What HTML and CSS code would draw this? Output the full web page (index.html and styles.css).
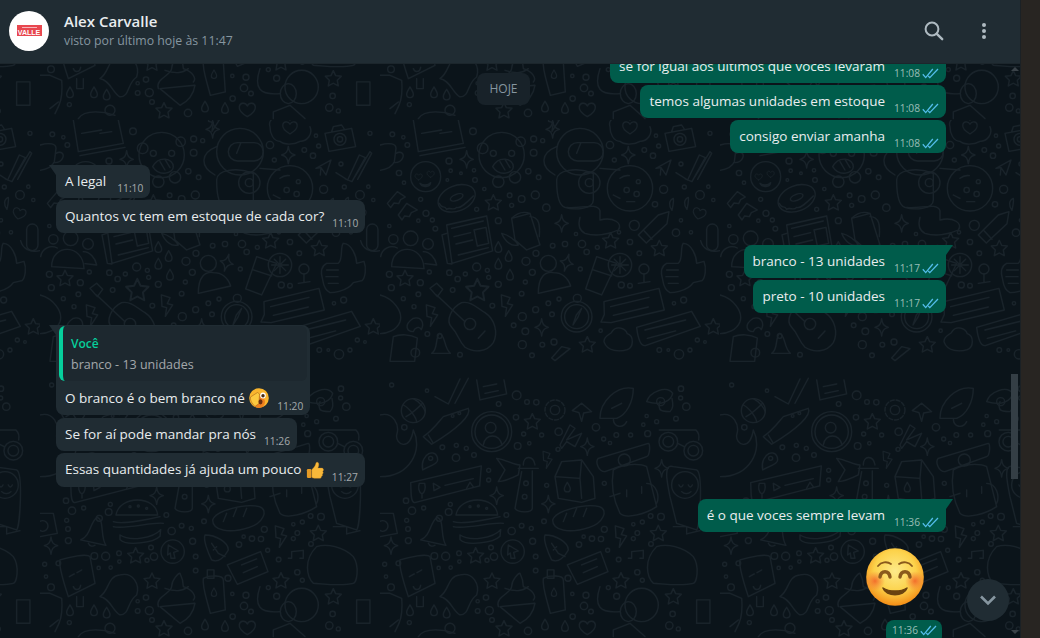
FILE: index.html
```html
<!DOCTYPE html>
<html lang="pt-BR">
  <head>
    <meta charset="UTF-8" />
    <title>Alex Carvalle</title>
    <link rel="stylesheet" href="styles.css">
  </head>
  <body>
    <svg class="defs" width="0" height="0">
      <defs>
        <symbol id="ticks" viewBox="0 0 17 11">
          <path d="M.8 6.300l2.900 3.300L10.800 1M6.300 8l1.500 1.600L16 1" fill="none" stroke="currentColor" stroke-width="1.300"/>
        </symbol>
        <path id="s5" d="M0-24l7 15 17 2-12 12 3 17-15-8-15 8 3-17-12-12 17-2z"/>
        <path id="s4" d="M0-26c2 16 6 22 20 26-14 4-18 10-20 26-2-16-6-22-20-26 14-4 18-10 20-26z"/>
        <path id="hrt" d="M0 22c-14-8-26-18-24-30 2-12 18-14 24-2 6-12 22-10 24 2 2 12-10 22-24 30z"/>
        <path id="drop" d="M0-20c6 10 10 16 10 22a10 10 0 0 1-20 0c0-6 4-12 10-22z"/>
        <path id="bolt" d="M-16-30l26 8-8 18 16 4-22 34 4-26-14-4z"/>

        <!-- drawn in 3x units, tile is 340x518 on screen -->
        <pattern id="doodles" x="40" y="56" width="340" height="518" patternUnits="userSpaceOnUse">
          <g transform="scale(.3333)" fill="none" stroke="#19232a" stroke-width="4" stroke-linejoin="round" stroke-linecap="round">
            <!-- calendar -->
            <path d="M100 0l15 95 135-25-15-70M120 107l135-25M125 40l60-10M180 40l35-5"/>
            <!-- mug -->
            <path d="M0 75c30-8 48-4 48 10l-5 40c-8 18-30 24-43 26M48 100c14-8 26 0 20 14-4 10-16 14-25 14"/>
            <!-- monkey -->
            <circle cx="365" cy="105" r="68"/><circle cx="308" cy="85" r="16"/><circle cx="422" cy="65" r="14"/>
            <circle cx="340" cy="100" r="9"/><circle cx="395" cy="100" r="9"/>
            <path d="M338 140c18-34 62-26 62 0 0 20-42 32-62 0zM360 125l15 25M375 118l15 25"/>
            <circle cx="355" cy="185" r="17"/><circle cx="405" cy="172" r="17"/>
            <!-- love face -->
            <circle cx="137" cy="170" r="45"/>
            <use href="#hrt" transform="translate(116 170) scale(.45)"/><use href="#hrt" transform="translate(152 162) scale(.45)"/>
            <path d="M120 190c10 8 24 6 32-2-2 14-26 16-32 2z"/>
            <!-- keys -->
            <path d="M22 250l30-35 24 16-14 8-6 12-14-2-10 14zM55 285l25-35 32 20-18 8-6 12-14-2-8 12z"/>
            <!-- donut -->
            <ellipse cx="230" cy="235" rx="58" ry="38" transform="rotate(-22 230 235)"/>
            <ellipse cx="230" cy="232" rx="20" ry="9" transform="rotate(-22 230 232)"/>
            <path d="M178 250c8 20 14 2 22 18 10-8 20 6 30-6 10 6 30-14 50-34"/>
            <!-- astronaut -->
            <circle cx="600" cy="95" r="70"/><rect x="565" y="68" width="105" height="55" rx="28"/>
            <path d="M590 100l12-30M530 80c-50 20-50 60-5 85M530 180c0-30 60-40 110-20v80c0 30-60 30-85 22-20-6-25-50-25-82z"/>
            <path d="M560 262c40 6 90-16 100 10v28c40-10 70 10 55 30-30 14-70 20-100 10-20-10-20-30-15-48"/>
            <circle cx="628" cy="188" r="32"/><circle cx="628" cy="188" r="12"/>
            <path d="M660 145l60 5"/>
            <!-- moon -->
            <circle cx="750" cy="205" r="68"/><circle cx="740" cy="210" r="8"/><circle cx="775" cy="185" r="6"/><circle cx="770" cy="222" r="8"/>
            <path d="M720 175c8-6 18-10 28-8M700 225l20 10M740 245h24"/>
            <!-- cloud with heart -->
            <path d="M690 20c-10-30 40-40 60-20M810 20c10 24-10 44-30 44-20 12-50 10-60 0-20 0-30-24-30-44"/>
            <use href="#hrt" transform="translate(750 22) scale(.9)"/>
            <!-- camera -->
            <path d="M855 40l80-15 12 55-80 14zM875 35l5-15 25-5 8 12"/>
            <circle cx="900" cy="58" r="18"/><circle cx="900" cy="58" r="8"/>
            <!-- checks -->
            <path d="M888 158l35 22 35-75 18 8-40 72-20-8M945 170l45-75 5 5-42 78"/>
            <path d="M828 145l45-25-15 45-15-22zM843 143l-2 22"/>
            <!-- newspaper -->
            <path d="M200 315l120-27 18 105-122 37zM200 340l-14 5 16 85 14 2"/>
            <path d="M215 325l95-22M222 350l50-12M228 372l50-12M235 405l90-22M282 330l36-8 8 48-34 8z"/>
            <!-- kettle -->
            <path d="M395 295l55-15 30 95-40 15-35-30zM395 295c20-20 40-20 55-15M450 290c30 0 30 30 28 60M365 340c20 4 40 20 50 35-20 6-40-10-50-35z"/>
            <!-- people -->
            <circle cx="92" cy="355" r="22"/><circle cx="40" cy="358" r="14"/><circle cx="144" cy="372" r="16"/>
            <path d="M35 440c0-70 95-70 97 6zM2 410c4-26 30-36 50-26M130 395c20 0 36 20 40 40l-35-4"/>
            <!-- person -->
            <circle cx="505" cy="430" r="24"/>
            <path d="M475 520c0-50 20-66 45-62 30 0 45 20 52 40z"/>
            <!-- juice -->
            <path d="M650 410l60 20-45 95-48-18zM640 450l55 18"/>
            <circle cx="720" cy="435" r="35"/><path d="M720 410v50M695 435h50M703 418l34 34M737 418l-34 34"/>
            <circle cx="792" cy="447" r="15"/><path d="M792 462v25M775 490l35-5"/>
            <!-- thumb -->
            <path d="M895 430c15-10 5-50 15-60 25 0 40 40 40 60l22-6c8 20 4 50-6 58l-26 6c-20 30-70 30-70 30-20-10-20-30-22-40-6-20-4-40 12-48z"/>
            <path d="M860 450h35M858 470h36M865 490h30"/>
            <!-- mic -->
            <rect x="980" y="312" width="34" height="80" rx="17"/>
            <path d="M962 362c6 26 30 36 58 30"/>
            <!-- pencil -->
            <path d="M775 345l60-60 32-10-6 36-62 58zM790 330l26 28"/>
            <path d="M880 235c-14 6-14 24-4 36 2-12 6-24 4-36zM925 232c-14 6-14 24-4 36 2-12 6-24 4-36z"/>
            <use href="#hrt" transform="translate(958 280) scale(.8) rotate(15)"/>
            <!-- guitar -->
            <path d="M150 505l20-15 18 18-16 22zM170 525l85 80"/>
            <path d="M245 548c30-6 50 20 70 30 30 20 40 60 25 90-20 30-60 30-85 14-20-20-20-40-40-60-20-20 0-60 30-74z"/>
            <circle cx="270" cy="612" r="17"/><path d="M295 655l20-22"/>
            <!-- compass -->
            <circle cx="590" cy="590" r="46"/><circle cx="590" cy="590" r="36"/><circle cx="592" cy="535" r="12"/>
            <path d="M605 565l-12 28-14 22 10-30z"/>
            <!-- chat bubbles -->
            <path d="M672 545l165-40 16 65-160 38-30-2 10-22z"/>
            <path d="M692 560l115-28M700 586l105-25"/>
            <path d="M770 622l165-48 26 45-165 58c-20 2-24-40-26-55z"/>
            <path d="M795 630l122-30M802 655l85-22"/>
            <!-- bell and cloud -->
            <path d="M155 700c20-10 10-50 24-60 18 6 12 44 32 60z"/><circle cx="179" cy="648" r="7"/>
            <path d="M672 665c0-20 20-20 24-30 14-20 40-10 46 6 20 6 20 40 0 48-20 6-60 8-70-24z"/>
            <path d="M40 650c20-8 50-8 72 4l-8 70H30z"/><circle cx="106" cy="698" r="13"/>
            <path d="M545 680l25 6-45 36-10-8zM0 525c40 10 70 50 60 80-10 26-40 36-60 36"/>
            <path d="M100 635c-20 0-30-20 0-40 24-6 34 14 24 34-6-12-20-6-24 6z"/>

            <!-- second half -->
            <g transform="translate(0 780)">
              <!-- ball -->
              <circle cx="100" cy="92" r="36"/><path d="M70 75c20 10 40 40 40 52M128 70c-20 20-30 30-50 40M100 56c20 10 34 30 36 40"/>
              <!-- checks -->
              <path d="M165 50l40 22 35-75M225 70l40-75"/>
              <path d="M290 0l10 60 80-18-8-42M310 20l40-8M315 40l40-8"/>
              <!-- sneaker -->
              <path d="M130 170c30-20 50-50 60-60l75-25c10 20-30 60-110 108zM145 165l15 25"/>
              <circle cx="218" cy="108" r="4"/><circle cx="238" cy="100" r="4"/>
              <!-- moon shape -->
              <path d="M0 105c40-10 60 30 50 60-4 30 40 50 50-15 30 60-10 140-100 140"/>
              <!-- profile -->
              <circle cx="335" cy="155" r="60"/><circle cx="335" cy="155" r="50"/><circle cx="332" cy="143" r="16"/>
              <path d="M310 195c4-36 50-36 56 0"/>
              <!-- gear -->
              <circle cx="525" cy="90" r="14"/><circle cx="525" cy="90" r="30" stroke-dasharray="12 6"/>
              <path d="M540 195l30-60 15 10-25 35 45-20-20 40-25-15-15 20zM605 70l30 25-24 4-6 25-8-26-20-6z"/>
              <!-- rocket fragment -->
              <path d="M660 115c0-50 50-100 100-90 0 40-20 80-50 90zM695 85l30-15M800 65c10-30 60-50 78-25-4 20-30 40-78 25zM840 65c-10 30 10 30 30 30 10-10 10-20 6-40M700 115c0 30 30 30 40 10"/>
              <circle cx="842" cy="65" r="12"/>
              <!-- glasses -->
              <circle cx="865" cy="185" r="28"/><circle cx="865" cy="185" r="16"/><circle cx="940" cy="212" r="28"/><circle cx="940" cy="212" r="16"/>
              <path d="M838 150l110 0c10 10 10 20 8 30M893 190l20 10"/>
              <!-- pin -->
              <path d="M128 270c-10-50 44-70 45-30 0 14-30 20-45 30z"/><circle cx="152" cy="235" r="6"/>
              <!-- voice message -->
              <path d="M92 308l212-50-5 60-195 50c-14 0-10-40-12-60z"/>
              <path d="M118 310l16 0c4 14 0 28-8 32-10-4-12-20-8-32zM126 342v12M160 310l20 12-18 10zM195 316l85-20M260 325l10-18 10 14"/>
              <!-- lighthouse -->
              <path d="M350 235c30 4 50 20 70 20l-5 30c-20 10-40 20-60 20l20-35zM415 265h60M430 255c0-30 30-30 35 0M425 275l-20 110c10 14 50 14 52 0v-112"/>
              <circle cx="438" cy="310" r="7"/><circle cx="434" cy="350" r="7"/>
              <use href="#bolt" transform="translate(502 238) scale(.8)"/>
              <!-- milk -->
              <path d="M545 245l60-5 35 50 5 65-40 12-70-12-10-65zM605 240l-5 55-75-5M600 295l5 60"/>
              <use href="#drop" transform="translate(562 325) scale(.9)"/>
              <!-- backpack -->
              <path d="M655 235l150-45c6 0 6 36-5 40l-125 45c-20 0-30-30-20-40zM700 270c30-20 80-20 100-10l30 120c-30 20-90 40-110 20-10-20-30-70-20-130z"/>
              <path d="M690 350l30-10M800 310c30 0 40 40 30 60M740 330v20M785 320v20"/>
              <circle cx="733" cy="240" r="18"/>
              <!-- bread -->
              <path d="M518 420c10-30 100-50 140-40 30 10 10 50-30 62-60 20-110 10-110-22zM560 400l-10 25M590 385l-10 25M620 385l-10 25"/>
              <!-- burger -->
              <path d="M228 405c10-60 120-60 125 0zM220 425c30 10 120-10 140-15M220 440c30 10 120-15 150-10M240 465c30 20 100 10 122-16l-2 20c-20 20-100 30-120 10z"/>
              <circle cx="270" cy="380" r="3"/><circle cx="295" cy="378" r="3"/><circle cx="320" cy="385" r="3"/>
              <!-- camera -->
              <path d="M0 400l40 0 12 60-52 10"/><circle cx="8" cy="438" r="16"/>
              <!-- bell -->
              <path d="M122 480c30-10 30-60 50-68 22 8 8 60 26 84zM145 490c4 10 14 10 20 6"/><circle cx="178" cy="415" r="9"/>
              <!-- cursor -->
              <circle cx="398" cy="515" r="35"/><path d="M385 495l30 18-14 4 4 18-12 0-2-16-8 6z"/>
              <!-- leaf -->
              <path d="M495 465c30 0 70 20 70 45-10 20-30 40-50 30-10-20-26-60-20-75zM515 490l20 30 20 10M520 510l10-10"/>
              <path d="M562 555l100-40 22 60-92 38zM605 555l45-18M610 578l42-18"/>
              <path d="M755 515v20M755 515l35-4v22M745 535h10M780 535h10"/>
              <!-- splat and ice -->
              <path d="M830 500c30-10 80 0 110 30 20 30 10 80 0 80-40 10-100 0-120 0-20-20-30-70 10-110z"/>
              <path d="M60 540c30-10 80-20 90-10l15 80-80 40c-10-30-30-90-25-110zM110 650v30h20v-30"/>
              <path d="M88 590l15-8M125 570l-14 8M100 620c6 14 20 10 22-4"/>
              <path d="M180 650c30-20 20-60 60-65 40-10 60 30 50 60-30 20-20 60-50 60-20-10-30-50-60-55z"/>
              <!-- cupcake -->
              <path d="M355 680c-10-30 40-40 40-60 0-20 20-40 25-40 10 20 10 30 10 40 30 10 40 30 30 40M360 680l60 50c20-10 40-30 45-60zM375 625c30 10 50 10 70-5"/>
              <!-- bottle -->
              <path d="M490 595c20-10 60-10 60 5l6 90-45 10c-10-40-25-80-21-105zM502 570h20v25h-20z"/>
              <use href="#drop" transform="translate(522 640) scale(.8)"/>
              <!-- dog -->
              <circle cx="785" cy="675" r="50"/><ellipse cx="745" cy="695" rx="24" ry="30"/>
              <path d="M660 620c-20 60 0 80 60 75M700 770l0-20 50-20 45 40"/>
              <!-- small items -->
              <path d="M0 640h30l35 15c5 60-10 80-20 100M30 740l25-20"/>
              <use href="#hrt" transform="translate(622 742) scale(1)"/>
              <path d="M115 770c20-30 80-20 110-10"/><circle cx="210" cy="745" r="15"/>
              <path d="M870 350c-10-50-20-100 10-90l70 10c20 10 10 170 0 180l-60-20zM880 440h40v22l40-10"/>
              <circle cx="915" cy="315" r="40"/><path d="M897 315c4 8 8 8 12 0M925 315c4 8 8 8 12 0M905 335c8 8 20 8 28 0"/>
              <path d="M950 660h40v70h-40z"/>
              <use href="#s5" x="457" y="125"/><use href="#s5" x="287" y="527"/><use href="#s5" x="336" y="603"/>
              <use href="#s5" x="723" y="602"/><use href="#s5" x="835" y="460"/><use href="#s5" x="880" y="650"/><use href="#s5" x="372" y="746"/>
              <use href="#s4" x="350" y="347"/><use href="#s4" x="505" y="372"/><use href="#s4" x="845" y="265"/><use href="#s4" x="33" y="497"/><use href="#s4" x="622" y="200"/>
              <use href="#drop" x="90" y="695"/><use href="#drop" x="162" y="695"/><use href="#drop" x="200" y="702"/><use href="#drop" x="495" y="738"/><use href="#drop" x="555" y="742"/>
              <use href="#bolt" x="722" y="468"/>
              <circle cx="410" cy="46" r="13"/><circle cx="356" cy="72" r="7"/><circle cx="441" cy="66" r="7"/><circle cx="469" cy="67" r="8"/>
              <circle cx="408" cy="112" r="8"/><circle cx="431" cy="162" r="6"/><circle cx="413" cy="198" r="10"/><circle cx="448" cy="190" r="5"/>
              <circle cx="485" cy="165" r="6"/><circle cx="536" cy="155" r="11"/><circle cx="534" cy="208" r="6"/><circle cx="648" cy="142" r="11"/>
              <circle cx="671" cy="177" r="6"/><circle cx="690" cy="189" r="5"/><circle cx="709" cy="165" r="7"/><circle cx="752" cy="165" r="6"/>
              <circle cx="803" cy="161" r="9"/><circle cx="790" cy="134" r="5"/><circle cx="830" cy="125" r="6"/><circle cx="800" cy="108" r="5"/>
              <circle cx="187" cy="202" r="7"/><circle cx="228" cy="233" r="11"/><circle cx="229" cy="196" r="6"/><circle cx="259" cy="205" r="6"/><circle cx="282" cy="225" r="7"/>
              <circle cx="73" cy="142" r="8"/><circle cx="78" cy="362" r="8"/><circle cx="96" cy="392" r="11"/><circle cx="131" cy="384" r="6"/>
              <circle cx="206" cy="396" r="10"/><circle cx="211" cy="373" r="6"/><circle cx="80" cy="421" r="6"/><circle cx="84" cy="447" r="7"/><circle cx="85" cy="482" r="9"/>
              <circle cx="326" cy="271" r="6"/><circle cx="326" cy="300" r="6"/><circle cx="379" cy="405" r="7"/><circle cx="395" cy="453" r="11"/><circle cx="425" cy="437" r="7"/>
              <circle cx="454" cy="445" r="6"/><circle cx="458" cy="484" r="9"/><circle cx="492" cy="424" r="7"/><circle cx="500" cy="316" r="6"/><circle cx="673" cy="310" r="6"/>
              <circle cx="673" cy="448" r="9"/><circle cx="611" cy="470" r="5"/><circle cx="636" cy="476" r="8"/><circle cx="663" cy="477" r="8"/><circle cx="597" cy="494" r="8"/>
              <circle cx="683" cy="511" r="6"/><circle cx="716" cy="539" r="7"/><circle cx="760" cy="433" r="5"/><circle cx="772" cy="459" r="7"/><circle cx="812" cy="408" r="7"/>
              <circle cx="843" cy="410" r="10"/><circle cx="787" cy="426" r="6"/><circle cx="760" cy="476" r="6"/><circle cx="813" cy="492" r="7"/><circle cx="772" cy="577" r="8"/><circle cx="787" cy="601" r="6"/>
              <circle cx="163" cy="528" r="10"/><circle cx="197" cy="529" r="12"/><circle cx="237" cy="520" r="7"/><circle cx="238" cy="545" r="5"/><circle cx="212" cy="563" r="5"/><circle cx="176" cy="564" r="5"/>
              <circle cx="333" cy="503" r="7"/><circle cx="342" cy="530" r="11"/><circle cx="321" cy="541" r="6"/><circle cx="467" cy="530" r="7"/><circle cx="467" cy="572" r="7"/>
              <circle cx="564" cy="595" r="9"/><circle cx="685" cy="623" r="6"/><circle cx="710" cy="649" r="9"/><circle cx="618" cy="646" r="9"/><circle cx="612" cy="678" r="11"/><circle cx="633" cy="695" r="7"/><circle cx="578" cy="710" r="8"/>
              <circle cx="577" cy="642" r="5"/><circle cx="318" cy="653" r="8"/><circle cx="293" cy="664" r="5"/><circle cx="293" cy="693" r="7"/><circle cx="328" cy="692" r="12"/><circle cx="336" cy="720" r="7"/><circle cx="444" cy="753" r="11"/>
              <circle cx="33" cy="622" r="10"/><circle cx="14" cy="553" r="6"/><circle cx="55" cy="550" r="7"/><circle cx="18" cy="590" r="5"/><circle cx="88" cy="728" r="6"/>
              <circle cx="35" cy="15" r="6"/><circle cx="141" cy="32" r="5"/><circle cx="903" cy="26" r="8"/><circle cx="902" cy="54" r="6"/><circle cx="919" cy="80" r="11"/><circle cx="888" cy="116" r="7"/>
              <circle cx="878" cy="702" r="8"/><circle cx="868" cy="737" r="11"/><circle cx="895" cy="747" r="6"/>
            </g>

            <!-- first half stars and dots -->
            <use href="#s5" x="340" y="248"/><use href="#s5" x="692" y="362"/><use href="#s5" x="838" y="385"/><use href="#s5" x="75" y="475"/>
            <use href="#s5" x="292" y="510" transform="translate(292 510) scale(1.4) translate(-292 -510)"/><use href="#s5" x="622" y="674"/><use href="#s5" x="1000" y="620"/>
            <use href="#s4" x="260" y="118"/><use href="#s4" x="745" y="105"/><use href="#s4" x="518" y="28"/><use href="#s4" x="545" y="310"/><use href="#s4" x="485" y="622"/>
            <use href="#s4" x="560" y="428" transform="rotate(15 560 428)"/>
            <use href="#drop" x="355" y="385"/><use href="#drop" x="386" y="412"/><use href="#drop" x="355" y="435"/><use href="#drop" x="390" y="468"/>
            <use href="#bolt" x="380" y="555"/><use href="#bolt" x="155" y="585"/><use href="#bolt" x="520" y="0"/>
            <circle cx="37" cy="43" r="7"/><circle cx="70" cy="52" r="5"/><circle cx="82" cy="75" r="7"/><circle cx="57" cy="159" r="8"/><circle cx="72" cy="188" r="5"/>
            <circle cx="207" cy="123" r="9"/><circle cx="212" cy="152" r="5"/><circle cx="243" cy="160" r="4"/><circle cx="202" cy="180" r="4"/><circle cx="282" cy="151" r="5"/><circle cx="285" cy="180" r="7"/>
            <circle cx="279" cy="34" r="10"/><circle cx="461" cy="57" r="9"/><circle cx="488" cy="62" r="6"/><circle cx="461" cy="98" r="10"/><circle cx="445" cy="154" r="8"/><circle cx="476" cy="172" r="7"/>
            <circle cx="466" cy="225" r="12"/><circle cx="425" cy="237" r="10"/><circle cx="389" cy="226" r="7"/><circle cx="395" cy="256" r="6"/><circle cx="499" cy="263" r="11"/><circle cx="313" cy="207" r="5"/><circle cx="290" cy="268" r="6"/>
            <circle cx="122" cy="238" r="6"/><circle cx="138" cy="280" r="9"/><circle cx="157" cy="300" r="6"/><circle cx="115" cy="302" r="5"/><circle cx="166" cy="326" r="7"/><circle cx="28" cy="318" r="5"/><circle cx="355" cy="302" r="9"/>
            <circle cx="588" cy="342" r="5"/><circle cx="518" cy="377" r="7"/><circle cx="555" cy="372" r="8"/><circle cx="606" cy="372" r="11"/><circle cx="652" cy="382" r="6"/><circle cx="620" cy="396" r="8"/><circle cx="750" cy="366" r="8"/><circle cx="717" cy="337" r="5"/><circle cx="763" cy="316" r="15"/><circle cx="778" cy="400" r="7"/>
            <circle cx="888" cy="338" r="11"/><circle cx="933" cy="337" r="5"/><circle cx="903" cy="301" r="5"/><circle cx="825" cy="253" r="8"/><circle cx="851" cy="208" r="12"/><circle cx="913" cy="201" r="6"/><circle cx="960" cy="225" r="13"/><circle cx="1000" cy="240" r="5"/><circle cx="985" cy="200" r="5"/><circle cx="903" cy="132" r="6"/><circle cx="690" cy="75" r="11"/><circle cx="703" cy="120" r="6"/><circle cx="793" cy="90" r="7"/><circle cx="836" cy="78" r="6"/><circle cx="819" cy="107" r="8"/><circle cx="828" cy="47" r="5"/><circle cx="990" cy="40" r="6"/>
            <circle cx="468" cy="400" r="9"/><circle cx="438" cy="424" r="12"/><circle cx="457" cy="457" r="9"/><circle cx="436" cy="486" r="6"/><circle cx="425" cy="521" r="7"/><circle cx="505" cy="550" r="7"/><circle cx="537" cy="537" r="6"/><circle cx="467" cy="569" r="9"/><circle cx="516" cy="583" r="7"/><circle cx="427" cy="590" r="12"/><circle cx="401" cy="616" r="7"/><circle cx="436" cy="634" r="10"/><circle cx="427" cy="674" r="12"/><circle cx="487" cy="674" r="7"/><circle cx="522" cy="666" r="9"/><circle cx="456" cy="706" r="7"/>
            <circle cx="290" cy="441" r="12"/><circle cx="322" cy="451" r="6"/><circle cx="208" cy="458" r="8"/><circle cx="256" cy="462" r="6"/><circle cx="233" cy="477" r="8"/><circle cx="326" cy="472" r="6"/><circle cx="355" cy="493" r="9"/><circle cx="218" cy="510" r="7"/><circle cx="337" cy="557" r="7"/>
            <circle cx="28" cy="463" r="9"/><circle cx="34" cy="503" r="9"/><circle cx="121" cy="488" r="9"/><circle cx="115" cy="523" r="7"/><circle cx="148" cy="456" r="6"/><circle cx="70" cy="536" r="6"/><circle cx="102" cy="560" r="6"/><circle cx="142" cy="642" r="7"/><circle cx="240" cy="704" r="7"/>
            <circle cx="724" cy="495" r="9"/><circle cx="750" cy="497" r="7"/><circle cx="601" cy="447" r="6"/><circle cx="662" cy="632" r="5"/><circle cx="882" cy="550" r="5"/><circle cx="911" cy="540" r="9"/><circle cx="838" cy="690" r="7"/><circle cx="865" cy="690" r="4"/><circle cx="897" cy="703" r="14"/><circle cx="930" cy="690" r="6"/><circle cx="952" cy="660" r="6"/><circle cx="975" cy="666" r="4"/>
          </g>
        </pattern>
      </defs>
    </svg>

    <div class="app">
      <div class="main">
        <header class="topbar">
          <div class="avatar">
            <div class="logo">
              <span class="logo-top"></span>
              <span class="logo-name">VALLE</span>
            </div>
          </div>
          <div class="contact">
            <div class="contact-name">Alex Carvalle</div>
            <div class="contact-status">visto por último hoje às 11:47</div>
          </div>
          <svg class="icon-search" width="24" height="24" viewBox="0 0 24 24">
            <circle cx="10" cy="10" r="6.4" fill="none" stroke="#aebac1" stroke-width="2"/>
            <path d="M14.800 14.800l5.400 5.400" stroke="#aebac1" stroke-width="2.400" stroke-linecap="round"/>
          </svg>
          <div class="icon-menu"><i></i><i></i><i></i></div>
        </header>

        <section class="chat">
          <svg class="wallpaper" width="100%" height="100%"><rect width="100%" height="100%" fill="url(#doodles)"/></svg>
          <div class="date-chip">HOJE</div>

          <div class="messages">
            <div class="msg out first">
              <span class="text">se for igual aos ultimos que voces levaram</span>
              <span class="meta">11:08 <svg class="ticks"><use href="#ticks"/></svg></span>
            </div>
            <div class="msg out">
              <span class="text">temos algumas unidades em estoque</span>
              <span class="meta">11:08 <svg class="ticks"><use href="#ticks"/></svg></span>
            </div>
            <div class="msg out">
              <span class="text">consigo enviar amanha</span>
              <span class="meta">11:08 <svg class="ticks"><use href="#ticks"/></svg></span>
            </div>

            <div class="msg in tail group short">
              <span class="text">A legal</span>
              <span class="meta">11:10</span>
            </div>
            <div class="msg in">
              <span class="text">Quantos vc tem em estoque de cada cor?</span>
              <span class="meta">11:10</span>
            </div>

            <div class="msg out tail group">
              <span class="text">branco - 13 unidades</span>
              <span class="meta">11:17 <svg class="ticks"><use href="#ticks"/></svg></span>
            </div>
            <div class="msg out">
              <span class="text">preto - 10 unidades</span>
              <span class="meta">11:17 <svg class="ticks"><use href="#ticks"/></svg></span>
            </div>

            <div class="msg in tail group has-quote">
              <div class="quote">
                <div class="quote-author">Você</div>
                <div class="quote-text">branco - 13 unidades</div>
              </div>
              <div class="msg-row">
                <span class="text">O branco é o bem branco né
                  <svg class="emoji" viewBox="0 0 20 20">
                    <circle cx="10" cy="10" r="9.800" fill="#f9b52e"/>
                    <circle cx="10" cy="14" r="6" fill="#ee7f1e"/>
                    <ellipse cx="14" cy="7.500" rx="2.800" ry="3" fill="#fff"/>
                    <circle cx="14" cy="7.800" r="1.700" fill="#4a2c10"/>
                    <path d="M1.500 9l7-4.500 2 1.500-.5 9.500-4 3C2.500 15 1 12 1.500 9z" fill="#fcc93f" stroke="#a9641a" stroke-width=".6"/>
                    <ellipse cx="11.500" cy="13.800" rx="2" ry="2.600" fill="#6b2f10"/>
                  </svg>
                </span>
                <span class="meta">11:20</span>
              </div>
            </div>
            <div class="msg in after-quote">
              <span class="text">Se for aí pode mandar pra nós</span>
              <span class="meta">11:26</span>
            </div>
            <div class="msg in tall">
              <span class="text">Essas quantidades já ajuda um pouco
                <svg class="emoji thumb" viewBox="0 0 20 20">
                  <path d="M6.500 9.500c2-1.500 4-4 4.600-7.200.2-1.400 2.600-1.200 3 .6.400 1.800-.3 3.600-.9 5h4.300c2.300 0 2.500 3 1 3.600 1 .9.800 2.700-.4 3.200.6 1-.1 2.400-1.100 2.600.2 1.100-.6 2-1.800 2H10c-1.500 0-2.300-.8-3.500-.9z" fill="#f8b83a" stroke="#d18a1e" stroke-width=".4"/>
                  <rect x="1" y="9" width="5" height="10" rx="1.400" fill="#e59a25"/>
                </svg>
              </span>
              <span class="meta">11:27</span>
            </div>

            <div class="msg out tail group">
              <span class="text">é o que voces sempre levam</span>
              <span class="meta">11:36 <svg class="ticks"><use href="#ticks"/></svg></span>
            </div>

            <svg class="big-emoji" viewBox="0 0 58 58">
              <defs>
                <radialGradient id="face" cx="50%" cy="40%" r="58%">
                  <stop offset="0" stop-color="#fdea8a"/>
                  <stop offset=".62" stop-color="#fcd24a"/>
                  <stop offset="1" stop-color="#f4921a"/>
                </radialGradient>
                <radialGradient id="blush">
                  <stop offset="0" stop-color="#f26a2a" stop-opacity=".95"/>
                  <stop offset="1" stop-color="#f47a3a" stop-opacity="0"/>
                </radialGradient>
              </defs>
              <circle cx="29" cy="29" r="28.800" fill="url(#face)"/>
              <circle cx="9" cy="33" r="10" fill="url(#blush)"/>
              <circle cx="49" cy="33" r="10" fill="url(#blush)"/>
              <g fill="none" stroke="#8a5a1c" stroke-linecap="round">
                <path d="M12 18c3-4 9-5 13-2M33 16c4-3 10-2 13 2" stroke-width="1.800"/>
                <path d="M14 29c1-7 9-7 10 0M34 29c1-7 9-7 10 0" stroke-width="3.400"/>
              </g>
              <path d="M17 40c6 4 18 4 24 0-3 9-21 9-24 0z" fill="#6a4210" stroke="#6a4210" stroke-width="1.500" stroke-linejoin="round"/>
            </svg>
            <div class="msg out sticker-time">
              <span class="meta">11:36 <svg class="ticks"><use href="#ticks"/></svg></span>
            </div>
          </div>

          <div class="scrollbar-up"></div>
          <div class="scrollbar-thumb"></div>
          <div class="scrollbar-down"></div>
          <button class="to-bottom">
            <svg width="20" height="12" viewBox="0 0 20 12"><path d="M3 2.500l7 7 7-7" fill="none" stroke="#8696a0" stroke-width="2.600"/></svg>
          </button>
        </section>
      </div>
      <div class="side"></div>
    </div>
  </body>
</html>
```

FILE: styles.css
```css
* {
  box-sizing: border-box;
}
html,
body {
  margin: 0;
  height: 100%;
  overflow: hidden;
}
body {
  font-family: "Open Sans", "Liberation Sans", sans-serif;
  background-color: #0b141a;
  color: #e9edef;
}
.defs {
  display: block;
  height: 0;
}
.app {
  display: flex;
  height: 638px;
}
.main {
  width: 1021px;
  display: flex;
  flex-direction: column;
  border-right: 1px solid #1b2125;
}
.side {
  flex: 1;
  background-color: #282522;
}

/* header */
.topbar {
  height: 64px;
  flex-shrink: 0;
  display: flex;
  align-items: center;
  padding: 0 24px 2px 9px;
  background-color: #202c33;
  border-bottom: 1px solid #1c262c;
  position: relative;
  z-index: 2;
}
.avatar {
  width: 40px;
  height: 40px;
  border-radius: 50%;
  background-color: white;
  display: flex;
  align-items: center;
  justify-content: center;
}
.logo {
  width: 25px;
  height: 11px;
  background-color: #e8474f;
  display: flex;
  flex-direction: column;
  align-items: center;
  justify-content: flex-end;
}
.logo-top {
  display: block;
  width: 15px;
  height: 1px;
  margin-bottom: 1px;
  background-color: #f6b5ba;
}
.logo-name {
  font-family: "Liberation Sans", sans-serif;
  font-size: 7px;
  font-weight: bold;
  line-height: 7px;
  color: white;
}
.contact {
  flex: 1;
  margin-left: 15px;
}
.contact-name {
  font-size: 15px;
  font-weight: 600;
  line-height: 20px;
  color: #e9edef;
}
.contact-status {
  font-size: 12.300px;
  line-height: 20px;
  color: #8696a0;
}
.icon-search {
  margin-right: 36px;
}
.icon-menu {
  width: 4px;
  margin-right: 10px;
  display: flex;
  flex-direction: column;
  gap: 2px;
}
.icon-menu i {
  width: 4px;
  height: 4px;
  border-radius: 50%;
  background-color: #aebac1;
}

/* chat */
.chat {
  flex: 1;
  position: relative;
  overflow: hidden;
  background-color: #0b141a;
}
.wallpaper {
  position: absolute;
  top: 0;
  left: 0;
}
.messages {
  position: relative;
  display: flex;
  flex-direction: column;
  align-items: flex-start;
  gap: 2px;
  margin-top: -14px;
  padding: 0 74px 0 56px;
}
.msg {
  min-height: 33px;
  display: flex;
  align-items: flex-start;
  padding: 7px 7px 0 9px;
  border-radius: 8px;
  font-size: 13.500px;
  line-height: 19px;
  position: relative;
  white-space: nowrap;
}
.msg.in {
  background-color: #202c33;
}
.msg.out {
  align-self: flex-end;
  background-color: #005c4b;
}
.msg.group {
  margin-top: 10px;
}
.msg.first {
  height: 33px;
}
.msg.after-quote {
  margin-top: 1px;
}
.msg.tall {
  min-height: 34px;
}
.msg.in.tail {
  border-top-left-radius: 0;
}
.msg.out.tail {
  border-top-right-radius: 0;
}
.msg.in.tail::before,
.msg.out.tail::before {
  content: "";
  position: absolute;
  top: 0;
  border-top: 10px solid;
}
.msg.in.tail::before {
  left: -7px;
  border-left: 7px solid transparent;
  border-top-color: #202c33;
}
.msg.out.tail::before {
  right: -7px;
  border-right: 7px solid transparent;
  border-top-color: #005c4b;
}
.text {
  display: block;
}
.meta {
  display: flex;
  align-items: center;
  gap: 2px;
  margin-left: 9px;
  margin-top: 9px;
  font-size: 10.200px;
  line-height: 15px;
  color: rgba(255, 255, 255, 0.6);
}
.msg.in .meta {
  margin-left: 8px;
}
.msg.in.short .meta {
  margin-left: 11px;
}
.msg.in.tall .meta {
  margin-top: 10px;
}
.ticks {
  width: 17px;
  height: 11px;
  color: #53bdeb;
}
.emoji {
  width: 20px;
  height: 20px;
  margin: -5px 0 -5px 1px;
  vertical-align: 0;
}
.emoji.thumb {
  width: 18px;
  height: 18px;
}

/* reply */
.msg.has-quote {
  display: block;
  width: 254px;
  height: 90px;
  padding: 1px 3px 0 3px;
}
.quote {
  height: 55px;
  width: 248px;
  padding: 9px 8px 0 8px;
  background-color: #1d282f;
  border-left: 4px solid #06cf9c;
  border-radius: 6px;
}
.quote-author {
  font-size: 12px;
  font-weight: 600;
  line-height: 18px;
  color: #06cf9c;
}
.quote-text {
  margin-top: 3px;
  font-size: 12.500px;
  line-height: 18px;
  color: rgba(255, 255, 255, 0.6);
}
.msg-row {
  display: flex;
  justify-content: space-between;
  padding: 8px 4px 0 6px;
}
.msg.in .msg-row .meta {
  margin-top: 10px;
}

/* sticker */
.big-emoji {
  align-self: flex-end;
  width: 58px;
  height: 58px;
  margin: 14px 22px 12px 0;
}
.msg.sticker-time {
  min-height: 24px;
  padding: 3px 5px 0 6px;
  margin-right: 4px;
}
.msg.out.sticker-time .meta {
  margin: 0;
}

/* overlays */
.date-chip {
  position: absolute;
  top: 9px;
  left: 477px;
  width: 53px;
  height: 32px;
  border-radius: 8px;
  background-color: #182229;
  color: #8696a0;
  font-size: 12px;
  line-height: 32px;
  text-align: center;
  z-index: 1;
}
.to-bottom {
  position: absolute;
  left: 967px;
  top: 515px;
  width: 42px;
  height: 42px;
  border: none;
  border-radius: 50%;
  background-color: #202c33;
  display: flex;
  align-items: center;
  justify-content: center;
  padding: 0;
}
.scrollbar-thumb {
  position: absolute;
  left: 1011px;
  top: 310px;
  width: 7px;
  height: 105px;
  background-color: #343e45;
}
.scrollbar-up,
.scrollbar-down {
  position: absolute;
  left: 1011px;
  border-left: 4px solid transparent;
  border-right: 4px solid transparent;
}
.scrollbar-up {
  top: 3px;
  border-bottom: 4px solid #3a4248;
}
.scrollbar-down {
  top: 566px;
  border-top: 4px solid #3a4248;
}
```
